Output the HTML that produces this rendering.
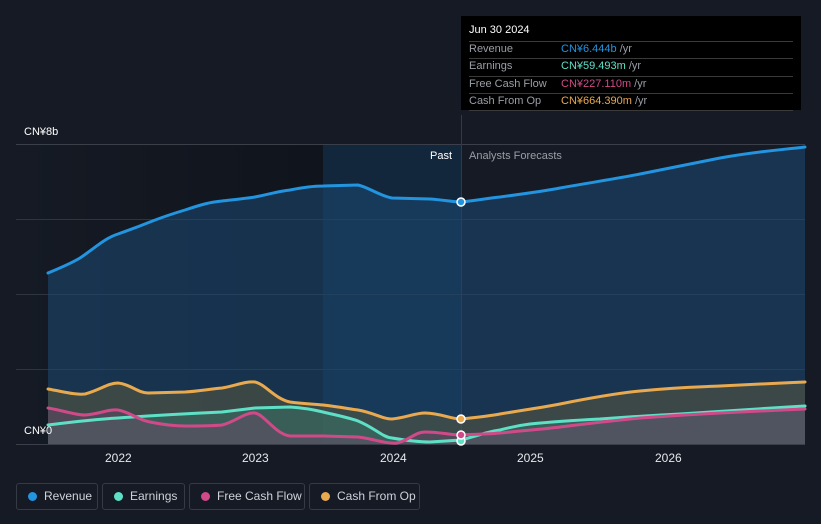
<!DOCTYPE html>
<html><head><meta charset="utf-8"><style>
body{margin:0;width:821px;height:524px;background:#151a24;font-family:"Liberation Sans","Noto Sans CJK SC",sans-serif;overflow:hidden;position:relative}
.t{position:absolute;font-size:11px;color:#fff}
.leg{position:absolute;top:483px;height:27px;border:1px solid #353a45;border-radius:3px;box-sizing:border-box;font-size:12px;color:#cfd2d8;line-height:25px;padding-left:27px}
.leg i{position:absolute;left:11px;top:8px;width:9px;height:9px;border-radius:50%}
</style></head><body>
<svg width="821" height="524" style="position:absolute;left:0;top:0">
<defs>
<linearGradient id="pg" x1="0" x2="1"><stop offset="0" stop-color="#151a24"/><stop offset="1" stop-color="#10141c"/></linearGradient>
</defs>
<rect x="16" y="145" width="307" height="299" fill="url(#pg)"/>
<rect x="323" y="145" width="138" height="299" fill="#132a42" opacity="0.8"/>
<g stroke="#2f3440" stroke-width="1">
<line x1="16" y1="144.5" x2="805" y2="144.5" stroke="#3a3f4a"/>
<line x1="16" y1="219.5" x2="805" y2="219.5"/>
<line x1="16" y1="294.5" x2="805" y2="294.5"/>
<line x1="16" y1="369.5" x2="805" y2="369.5"/>
<line x1="16" y1="444.5" x2="805" y2="444.5" stroke="#3a3f4a"/>
</g>
<line x1="461.5" y1="115" x2="461.5" y2="444" stroke="#2a3b52"/>
<path d="M48,273 C60,268 70,264 80,258 C95,248 105,238 118,234 C135,228 140,226 150,222 C165,216 175,213 185,210 C200,205 210,202 222,201 C240,199 250,198 255,197 C270,194 280,191 290,190 C305,187 315,186 323,186 L358,185 C368,187 380,196 392,198 L430,199 C445,200 452,202 461,202 C480,200 490,198 500,197 C530,193 545,191 560,188 C600,181 620,178 640,174 C680,166 700,162 720,158 C760,151 780,150 805,147 L805,444 L48,444Z" fill="#1b4a74" opacity="0.55"/>
<path d="M48,389 C65,392 75,395 85,394 C100,390 108,383 118,383 C130,384 138,393 148,393 L185,392 C200,391 210,389 222,388 C235,386 245,381 255,382 C265,384 275,399 290,402 C305,404 315,404 323,405 C340,407 350,409 358,410 C375,413 382,419 392,419 C405,418 415,413 425,413 C440,413 450,419 461,419 C480,417 490,416 500,414 C530,409 545,407 560,404 C600,396 620,393 640,391 C680,387 700,387 720,386 C760,384 780,383 805,382 L805,444 L48,444Z" fill="#5a5a40" opacity="0.55"/>
<path d="M48,425 C80,421 100,419 118,418 C160,415 200,413 222,412 L255,408 L290,407 C305,408 315,410 323,412 C340,416 350,418 358,421 C375,428 382,437 392,438 C410,441 420,442 430,442 L461,440 C480,435 490,431 500,430 C515,426 522,425 530,424 C560,421 580,420 600,419 C640,416 660,415 680,414 C740,410 770,408 805,406 L805,444 L48,444Z" fill="#3a7a6c" opacity="0.45"/>
<path d="M48,408 C65,411 75,415 85,415 C100,414 108,409 118,410 C130,412 138,420 150,422 C165,425 175,426 185,426 C200,426 212,426 222,425 C235,422 245,412 255,413 C265,415 275,434 290,436 L323,436 L358,437 C375,439 385,444 397,443 C410,440 415,432 425,432 C440,432 450,435 461,435 C480,434 490,434 500,433 C530,430 545,429 560,427 C600,422 620,420 640,418 C680,415 700,414 720,413 C760,411 780,410 805,409 L805,444 L48,444Z" fill="#6a4a6a" opacity="0.45"/>
<g fill="none" stroke-width="3" stroke-linecap="round">
<path d="M48,273 C60,268 70,264 80,258 C95,248 105,238 118,234 C135,228 140,226 150,222 C165,216 175,213 185,210 C200,205 210,202 222,201 C240,199 250,198 255,197 C270,194 280,191 290,190 C305,187 315,186 323,186 L358,185 C368,187 380,196 392,198 L430,199 C445,200 452,202 461,202 C480,200 490,198 500,197 C530,193 545,191 560,188 C600,181 620,178 640,174 C680,166 700,162 720,158 C760,151 780,150 805,147" stroke="#2394df"/>
<path d="M48,389 C65,392 75,395 85,394 C100,390 108,383 118,383 C130,384 138,393 148,393 L185,392 C200,391 210,389 222,388 C235,386 245,381 255,382 C265,384 275,399 290,402 C305,404 315,404 323,405 C340,407 350,409 358,410 C375,413 382,419 392,419 C405,418 415,413 425,413 C440,413 450,419 461,419 C480,417 490,416 500,414 C530,409 545,407 560,404 C600,396 620,393 640,391 C680,387 700,387 720,386 C760,384 780,383 805,382" stroke="#e8a94f"/>
<path d="M48,425 C80,421 100,419 118,418 C160,415 200,413 222,412 L255,408 L290,407 C305,408 315,410 323,412 C340,416 350,418 358,421 C375,428 382,437 392,438 C410,441 420,442 430,442 L461,440 C480,435 490,431 500,430 C515,426 522,425 530,424 C560,421 580,420 600,419 C640,416 660,415 680,414 C740,410 770,408 805,406" stroke="#5ee0c6"/>
<path d="M48,408 C65,411 75,415 85,415 C100,414 108,409 118,410 C130,412 138,420 150,422 C165,425 175,426 185,426 C200,426 212,426 222,425 C235,422 245,412 255,413 C265,415 275,434 290,436 L323,436 L358,437 C375,439 385,444 397,443 C410,440 415,432 425,432 C440,432 450,435 461,435 C480,434 490,434 500,433 C530,430 545,429 560,427 C600,422 620,420 640,418 C680,415 700,414 720,413 C760,411 780,410 805,409" stroke="#d04a8a"/>
</g>
<g stroke="#fff" stroke-width="1.5">
<circle cx="461" cy="202" r="4" fill="#2394df"/>
<circle cx="461" cy="419" r="4" fill="#e8a94f"/>
<circle cx="461" cy="441" r="4" fill="#5ee0c6"/>
<circle cx="461" cy="435" r="4" fill="#d04a8a"/>
</g>
</svg>
<div class="t" style="left:24px;top:126px">CN¥8b</div>
<div class="t" style="left:24px;top:425px">CN¥0</div>
<div class="t" style="left:430px;top:150px">Past</div>
<div class="t" style="left:469px;top:150px;color:#9a9ea6">Analysts Forecasts</div>
<div class="t" style="left:105px;top:451px;font-size:12px;color:#e6e8ec">2022</div>
<div class="t" style="left:242px;top:451px;font-size:12px;color:#e6e8ec">2023</div>
<div class="t" style="left:380px;top:451px;font-size:12px;color:#e6e8ec">2024</div>
<div class="t" style="left:517px;top:451px;font-size:12px;color:#e6e8ec">2025</div>
<div class="t" style="left:655px;top:451px;font-size:12px;color:#e6e8ec">2026</div>
<div style="position:absolute;left:461px;top:16px;width:340px;height:94px;background:#000;font-size:11px">
<div style="position:absolute;left:8px;top:8px;color:#fff">Jun 30 2024</div>
<div style="position:absolute;left:8px;top:25px;width:324px;border-top:1px solid #3a3a3a"></div>
<div style="position:absolute;left:8px;top:42px;width:324px;border-top:1px solid #3a3a3a"></div>
<div style="position:absolute;left:8px;top:60px;width:324px;border-top:1px solid #3a3a3a"></div>
<div style="position:absolute;left:8px;top:77px;width:324px;border-top:1px solid #3a3a3a"></div>
<div style="position:absolute;left:8px;top:94px;width:324px;border-top:1px solid #3a3a3a"></div>
<div style="position:absolute;left:8px;top:27px;color:#9a9ea6">Revenue</div>
<div style="position:absolute;left:100px;top:27px;color:#2394df">CN¥6.444b <span style="color:#9a9ea6">/yr</span></div>
<div style="position:absolute;left:8px;top:44px;color:#9a9ea6">Earnings</div>
<div style="position:absolute;left:100px;top:44px;color:#5ee0c6">CN¥59.493m <span style="color:#9a9ea6">/yr</span></div>
<div style="position:absolute;left:8px;top:62px;color:#9a9ea6">Free Cash Flow</div>
<div style="position:absolute;left:100px;top:62px;color:#d04a8a">CN¥227.110m <span style="color:#9a9ea6">/yr</span></div>
<div style="position:absolute;left:8px;top:79px;color:#9a9ea6">Cash From Op</div>
<div style="position:absolute;left:100px;top:79px;color:#e8a94f">CN¥664.390m <span style="color:#9a9ea6">/yr</span></div>
</div>
<div class="leg" style="left:16px;width:82px"><i style="background:#2394df"></i>Revenue</div>
<div class="leg" style="left:102px;width:83px"><i style="background:#5ee0c6"></i>Earnings</div>
<div class="leg" style="left:189px;width:116px"><i style="background:#d04a8a"></i>Free Cash Flow</div>
<div class="leg" style="left:309px;width:111px"><i style="background:#e8a94f"></i>Cash From Op</div>
</body></html>
